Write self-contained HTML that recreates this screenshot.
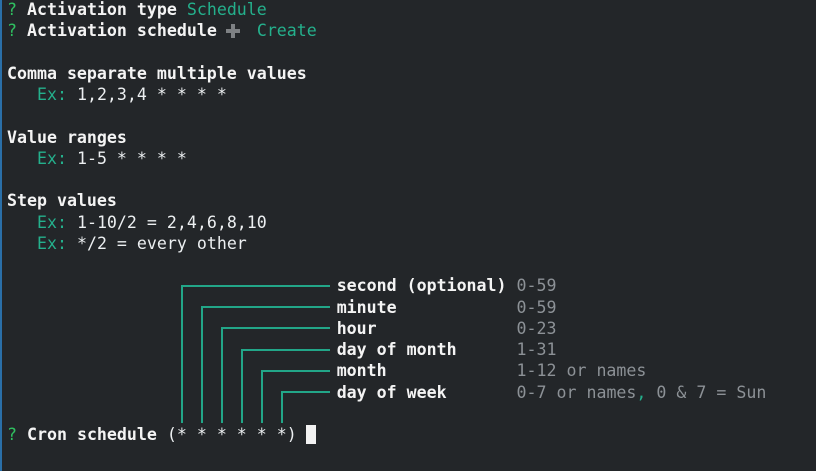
<!DOCTYPE html>
<html><head><style>
html,body{margin:0;padding:0;background:#232629;width:816px;height:471px;overflow:hidden}
pre{position:absolute;left:7px;top:-1px;margin:0;font-family:"DejaVu Sans Mono","Liberation Mono",monospace;font-size:16.6px;line-height:21.25px;color:#eceff1}
b{font-weight:bold;color:#f4f4f4}
.q{color:#2fc060}.t{color:#24b08c}.g{color:#8c9196}
.p{display:inline-block;width:20px}
.h{position:absolute;background:#22a688;height:1.5px}
.v{position:absolute;background:#22a688;width:1.5px}
.pl{position:absolute;background:#7e8184}
#edge{position:absolute;left:0;top:0;width:2px;height:471px;background:#2a6fa8}
#cur{position:absolute;left:306px;top:425px;width:10px;height:19px;background:#f2f2f2}
</style></head><body>
<div id="edge"></div>
<pre><span class="q">?</span> <b>Activation type</b> <span class="t">Schedule</span>
<span class="q">?</span> <b>Activation schedule</b> <span class="p"></span> <span class="t">Create</span>

<b>Comma separate multiple values</b>
   <span class="t">Ex:</span> 1,2,3,4 * * * *

<b>Value ranges</b>
   <span class="t">Ex:</span> 1-5 * * * *

<b>Step values</b>
   <span class="t">Ex:</span> 1-10/2 = 2,4,6,8,10
   <span class="t">Ex:</span> */2 = every other

                                 <b>second (optional)</b> <span class="g">0-59</span>
                                 <b>minute</b>            <span class="g">0-59</span>
                                 <b>hour</b>              <span class="g">0-23</span>
                                 <b>day of month</b>      <span class="g">1-31</span>
                                 <b>month</b>             <span class="g">1-12 or names</span>
                                 <b>day of week</b>       <span class="g">0-7 or names</span><span class="t">,</span><span class="g"> 0 &amp; 7 = Sun</span>

<span class="q">?</span> <b>Cron schedule</b> (* * * * * *)</pre>
<div class="pl" style="left:226px;top:29px;width:14px;height:4px"></div>
<div class="pl" style="left:231px;top:24px;width:4px;height:14px"></div>
<div class="h" style="left:181px;width:149px;top:285px"></div>
<div class="v" style="left:181px;height:138px;top:285px"></div>
<div class="h" style="left:201px;width:129px;top:306px"></div>
<div class="v" style="left:201px;height:117px;top:306px"></div>
<div class="h" style="left:221px;width:109px;top:327px"></div>
<div class="v" style="left:221px;height:96px;top:327px"></div>
<div class="h" style="left:241px;width:89px;top:349px"></div>
<div class="v" style="left:241px;height:74px;top:349px"></div>
<div class="h" style="left:261px;width:69px;top:370px"></div>
<div class="v" style="left:261px;height:53px;top:370px"></div>
<div class="h" style="left:281px;width:49px;top:391px"></div>
<div class="v" style="left:281px;height:32px;top:391px"></div>
<div id="cur"></div>
</body></html>
